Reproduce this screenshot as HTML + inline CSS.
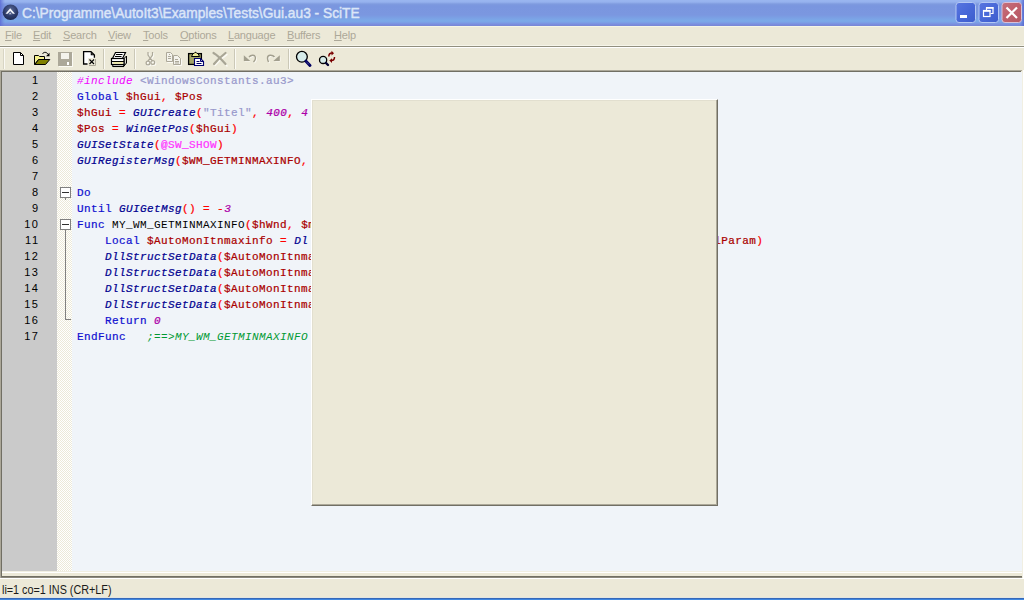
<!DOCTYPE html>
<html>
<head>
<meta charset="utf-8">
<title>SciTE</title>
<style>
html,body{margin:0;padding:0;}
body{width:1024px;height:600px;overflow:hidden;position:relative;background:#ece9d8;font-family:"Liberation Sans",sans-serif;}
.abs{position:absolute;}
#title{left:0;top:0;width:1024px;height:26px;background:linear-gradient(to bottom,#9ab6f0 0px,#96b2ee 2px,#7f9bdf 4px,#7a96df 6px,#7b97e0 15px,#7ba1e5 18px,#7baae8 21px,#7b9ce4 23px,#7b90e0 24px,#7886d4 26px);}
#title .txt{left:22px;top:4px;color:#dbe6f8;font-weight:normal;-webkit-text-stroke:0.45px #dbe6f8;font-size:14.5px;line-height:18px;white-space:nowrap;letter-spacing:0px;transform:scaleX(0.948);transform-origin:0 0;}
#menu{left:0;top:26px;width:1024px;height:20px;background:#ece9d8;border-top:1px solid #f4f6e6;box-sizing:border-box;}
#menu span{position:absolute;top:1px;font-size:11px;line-height:14px;color:#aca899;white-space:nowrap;letter-spacing:-0.2px;}
#menu span u{text-decoration:underline;text-underline-offset:1px;}
#tsep0{left:0;top:45px;width:1024px;height:1px;background:#f6f5ea;}
#tsep{left:0;top:46px;width:1024px;height:1px;background:#918f7f;}
#tsep2{left:0;top:47px;width:1024px;height:1px;background:#ffffff;}
#tool{left:0;top:48px;width:1024px;height:22px;background:#ece9d8;}
.vsep{position:absolute;top:50px;width:1px;height:18px;background:#c5c2b2;border-right:1px solid #fff;}
#edtop{left:0;top:70px;width:1022px;height:1px;background:#aca899;}
#edtop2{left:1px;top:71px;width:1020px;height:1px;background:#716f64;}
#edleft{left:0;top:70px;width:1px;height:508px;background:#aca899;}
#edleft2{left:1px;top:71px;width:1px;height:506px;background:#716f64;}
#lnum{left:2px;top:72px;width:55px;height:499px;background:#cacaca;}
#fold{left:57px;top:72px;width:15px;height:499px;background-color:#fff;background-image:linear-gradient(45deg,#ece9d8 25%,transparent 25%,transparent 75%,#ece9d8 75%),linear-gradient(45deg,#ece9d8 25%,transparent 25%,transparent 75%,#ece9d8 75%);background-size:2px 2px;background-position:0 0,1px 1px;}
#text{left:72px;top:72px;width:950px;height:499px;background:#f0f4f9;}
#edright{left:1022px;top:71px;width:1px;height:506px;background:#f1efe2;}
#edright2{left:1023px;top:70px;width:1px;height:508px;background:#fff;}
#edbot{left:2px;top:571px;width:1020px;height:1px;background:#f1efe2;}
#edbotw{left:2px;top:572px;width:1020px;height:1px;background:#fff;}
#edbot2{left:1px;top:576px;width:1021px;height:2px;background:linear-gradient(#716f64 0,#716f64 60%,#b8b5a6 100%);}
.ln{position:absolute;left:2px;width:37.5px;text-align:right;font-family:"Liberation Sans",sans-serif;font-size:11px;line-height:16px;color:#000;letter-spacing:1.5px;margin-top:0px;}
.cl{position:absolute;left:77px;margin-top:1px;height:16px;white-space:pre;font-family:"Liberation Mono",monospace;font-size:11px;letter-spacing:0.4px;line-height:16px;font-weight:normal;-webkit-text-stroke:0.22px;color:#000;}
.pp{color:#f000ff;font-style:italic;-webkit-text-stroke:0;}
.st{color:#9999cc;}
.kw{color:#1010d0;}
.va{color:#aa0000;}
.op{color:#ff0000;}
.fn{color:#000090;font-style:italic;}
.nu{color:#ac00a9;font-style:italic;}
.ma{color:#ff33ff;}
.cm{color:#009933;font-style:italic;-webkit-text-stroke:0;}
.df{color:#000;-webkit-text-stroke:0;}
#ov{left:311px;top:99px;width:407px;height:407px;background:#ece9d8;box-sizing:border-box;border:1px solid;border-color:#fff #716f64 #716f64 #fff;box-shadow:inset -1px -1px 0 #aca899,inset 1px 1px 0 #e2dfcf;}
#status{left:0;top:578px;width:1024px;height:20px;background:#ece9d8;border-top:1px solid #fff;box-sizing:border-box;}
#status .txt{left:2px;top:4px;font-size:12px;line-height:14px;color:#1a1a1a;white-space:nowrap;letter-spacing:0px;transform:scaleX(0.9);transform-origin:0 0;}
#blue{left:0;top:597px;width:1024px;height:3px;background:linear-gradient(#e2e6e2 0,#e2e6e2 33.3%,#3668b8 33.4%,#3668b8 66.6%,#3f87e0 66.7%);}
</style>
</head>
<body>
<div id="title" class="abs">
  <div class="abs txt">C:\Programme\AutoIt3\Examples\Tests\Gui.au3 - SciTE</div>
</div>
<!--TI-->
<svg class="abs" style="left:0;top:0" width="1024" height="26" viewBox="0 0 1024 26">
<defs>
<radialGradient id="ai" cx="0.5" cy="0.35" r="0.7"><stop offset="0" stop-color="#5a6a98"/><stop offset="0.6" stop-color="#2c3a68"/><stop offset="1" stop-color="#1c2648"/></radialGradient>
<linearGradient id="bb" x1="0" y1="0" x2="1" y2="1"><stop offset="0" stop-color="#5876e0"/><stop offset="0.5" stop-color="#4868d8"/><stop offset="1" stop-color="#3c5ccc"/></linearGradient>
<linearGradient id="rb" x1="0" y1="0" x2="1" y2="1"><stop offset="0" stop-color="#c4707c"/><stop offset="0.5" stop-color="#c0606c"/><stop offset="1" stop-color="#b45864"/></linearGradient>
</defs>
<!-- left edge -->
<defs><linearGradient id="le" x1="0" y1="0" x2="1" y2="0"><stop offset="0" stop-color="#5c6cd6" stop-opacity="0.9"/><stop offset="1" stop-color="#6a7ed8" stop-opacity="0"/></linearGradient><linearGradient id="re" x1="0" y1="0" x2="1" y2="0"><stop offset="0" stop-color="#5c6cd6" stop-opacity="0"/><stop offset="1" stop-color="#5468d0" stop-opacity="0.9"/></linearGradient></defs><rect x="0" y="0" width="5" height="26" fill="url(#le)"/><rect x="1020" y="0" width="4" height="26" fill="url(#re)"/>
<!-- app icon -->
<circle cx="10.500" cy="12.300" r="7.800" fill="url(#ai)"/>
<path d="M5.500,13.800 L10.200,8.300 L15,13.800 L12.800,13.800 L10.200,10.900 L7.700,13.800 Z" fill="#f4f6fa"/>
<path d="M8.800,14.200 L10.200,12.600 L11.700,14.200 Z" fill="#c8d0e0"/>
<!-- buttons -->
<rect x="956" y="2.500" width="19.500" height="20" rx="3" fill="url(#bb)" stroke="#b4c8f4" stroke-width="1"/>
<rect x="960" y="15" width="7" height="3" fill="#fff"/>
<rect x="979" y="2.500" width="19.500" height="20" rx="3" fill="url(#bb)" stroke="#b4c8f4" stroke-width="1"/>
<path d="M986.500,10 V7.800 H993 V13.500 H990.500" fill="none" stroke="#fff" stroke-width="1.200"/>
<rect x="986" y="7" width="7.500" height="1.600" fill="#fff"/>
<rect x="983.500" y="10.500" width="6.500" height="6" fill="none" stroke="#fff" stroke-width="1.200"/>
<rect x="983" y="10" width="7.500" height="1.800" fill="#fff"/>
<rect x="1002" y="2.500" width="19.500" height="20" rx="3" fill="url(#rb)" stroke="#d8c0d8" stroke-width="1"/>
<path d="M1006.500,7.500 L1017,18 M1017,7.500 L1006.500,18" stroke="#fff" stroke-width="2.200" stroke-linecap="butt"/>
</svg>
<!--/TI-->
<div id="menu" class="abs">
  <span style="left:5px"><u>F</u>ile</span>
  <span style="left:33px"><u>E</u>dit</span>
  <span style="left:63px"><u>S</u>earch</span>
  <span style="left:108px"><u>V</u>iew</span>
  <span style="left:143px"><u>T</u>ools</span>
  <span style="left:180px"><u>O</u>ptions</span>
  <span style="left:228px"><u>L</u>anguage</span>
  <span style="left:287px"><u>B</u>uffers</span>
  <span style="left:334px"><u>H</u>elp</span>
</div>
<div id="tsep0" class="abs"></div><div id="tsep" class="abs"></div>
<div id="tsep2" class="abs"></div>
<div id="tool" class="abs"></div>
<!--ICONS-->
<svg id="icons" class="abs" style="left:0;top:46px" width="360" height="26" viewBox="0 46 360 26">
<!-- gripper -->
<rect x="3" y="49" width="1" height="20" fill="#d8d5c4"/><rect x="4" y="49" width="1" height="20" fill="#fbfaf4"/>
<!-- New -->
<path d="M13.5,52.5 H20.5 L23.5,55.5 V64.5 H13.5 Z" fill="#fff" stroke="#000" stroke-width="1"/>
<path d="M20.5,52.5 V55.5 H23.5" fill="none" stroke="#000" stroke-width="1"/>
<!-- Open -->
<path d="M34.5,64.5 V55.5 H38.5 L39.5,56.5 H44.5 V59.5 H38.5 L34.5,64.5 Z" fill="#f6f28e" stroke="#000" stroke-width="1"/>
<path d="M38.7,59.5 H49.8 L45.5,64.5 H34.8 Z" fill="#808000" stroke="#000" stroke-width="1"/>
<path d="M42.5,54 C43.5,51.8 46.5,51.6 48.3,54.5" fill="none" stroke="#000" stroke-width="1"/>
<path d="M49.5,52.8 V56.2 H46 Z" fill="#000"/>
<!-- Save disabled -->
<rect x="59" y="53" width="14" height="14" fill="#fbfaf4"/>
<rect x="58" y="52" width="14" height="14" fill="#aca899"/>
<rect x="61" y="53" width="8" height="6" fill="#f4f3ec"/>
<rect x="67" y="62" width="2" height="3" fill="#fff"/>
<!-- Close -->
<path d="M84,52 H91 L94,55 V64 H84 Z" fill="#fff"/>
<path d="M87.5,64 H83.6 V51.6 H91 L94.4,55 V57.8" fill="none" stroke="#000" stroke-width="1.3"/>
<path d="M91.3,52 V54.7 H94" fill="none" stroke="#000" stroke-width="1.1"/>
<rect x="88" y="58" width="8" height="8" fill="#ece9d8"/>
<path d="M89,65.5 H95.5 V59" fill="none" stroke="#aca899" stroke-width="1"/>
<path d="M89.5,59.5 L94,64 M94,59.5 L89.5,64" stroke="#000" stroke-width="1.1" fill="none"/>
<!-- sep -->
<rect x="103" y="49" width="1" height="20" fill="#cbc8b7"/><rect x="104" y="49" width="1" height="20" fill="#fbfaf4"/>
<!-- Print -->
<path d="M115.5,52.5 H125.5 L122.5,58.5 H112.5 Z" fill="#fff" stroke="#000" stroke-width="1.2"/>
<path d="M116,54.5 H122.5 M115,56.5 H121.5" stroke="#000" stroke-width="1"/>
<path d="M124,58.500 L126.500,56 V63 L124,66 Z" fill="#d8d8d0" stroke="#000" stroke-width="1"/>
<rect x="111.5" y="58.5" width="12.5" height="6" fill="#fff" stroke="#000" stroke-width="1.2"/>
<rect x="112" y="61" width="12" height="1" fill="#000"/>
<rect x="113" y="62.2" width="10" height="1.5" fill="#ece498"/>
<rect x="113" y="65" width="10.5" height="1" fill="#fff"/>
<path d="M112.5,66.4 H124" stroke="#000" stroke-width="1.3"/>
<path d="M112.8,64.500 V66.500 M123.800,64.500 V66.500" stroke="#000" stroke-width="1"/>
<!-- sep -->
<rect x="134" y="49" width="1" height="20" fill="#cbc8b7"/><rect x="135" y="49" width="1" height="20" fill="#fbfaf4"/>
<!-- Cut disabled -->
<g fill="none" stroke-width="1.2">
<g stroke="#fbfaf4" transform="translate(1,1)"><path d="M148,52 V55 L150,58 L152.500,61 M152.500,52 V55 L150.500,58 L148,61"/><circle cx="148" cy="63" r="1.9"/><circle cx="152.800" cy="62.500" r="1.9"/></g>
<g stroke="#aca899"><path d="M148,52 V55 L150,58 L152.500,61 M152.500,52 V55 L150.500,58 L148,61"/><circle cx="148" cy="63" r="1.9"/><circle cx="152.800" cy="62.500" r="1.9"/></g>
</g>
<!-- Copy disabled -->
<g fill="#f4f3ec" stroke-width="1">
<path d="M167.5,53.5 H171.5 L173.5,55.5 V62.5 H167.5 Z" stroke="#fbfaf4" fill="none"/>
<path d="M166.5,52.5 H170.5 L172.5,54.5 V61.5 H166.5 Z" stroke="#aca899"/>
<path d="M168,56.5 H171 M168,58.5 H171 M169,54.5 H170" stroke="#aca899"/>
<path d="M174.5,56.5 H178.5 L181.5,59.5 V65.5 H174.5 Z" stroke="#fbfaf4" fill="none"/>
<path d="M173.5,55.5 H177.5 L180.5,58.5 V64.5 H173.5 Z" stroke="#aca899"/>
<path d="M175,59.5 H178 M175,61.5 H179 M175,63 H179" stroke="#aca899"/>
</g>
<!-- Paste -->
<rect x="188.600" y="53.600" width="12.800" height="10.800" fill="#a4a468" stroke="#000" stroke-width="1.3"/>
<path d="M191.500,56.500 L193,53.500 H194 L195,52.300 H196 L197,53.500 H198 L199.500,56.500 Z" fill="#f0ec98" stroke="#000" stroke-width="1"/>
<path d="M194.500,58.500 H200.500 L203.500,61.500 V65.500 H194.500 Z" fill="#fff" stroke="#000070" stroke-width="1.15"/>
<path d="M200.500,58.500 V61.500 H203.500" fill="none" stroke="#000070" stroke-width="1"/>
<rect x="196.500" y="61" width="3" height="1" fill="#000060"/><rect x="196.500" y="63" width="5" height="1" fill="#000060"/>
<!-- Delete disabled -->
<g fill="none" stroke-linecap="round">
<path d="M214,53.500 Q218,56 226,65 M226,53.500 Q219,58 214,64.500" stroke="#fbfaf4" stroke-width="1.5" transform="translate(1,1)"/>
<path d="M213.500,53 Q218,55.500 225.500,64 M225.500,53 Q219,58 214,64" stroke="#a8a595" stroke-width="2.2"/>
</g>
<!-- sep -->
<rect x="234" y="49" width="1" height="20" fill="#cbc8b7"/><rect x="235" y="49" width="1" height="20" fill="#fbfaf4"/>
<!-- Undo disabled -->
<path d="M245,57 V61.500 H250.500 Z" fill="#fbfaf4"/>
<path d="M250,58 C252,55.500 256.500,55.500 256.500,59 C256.500,61 255.500,62 254.500,63" fill="none" stroke="#fbfaf4" stroke-width="1.1"/>
<path d="M243.800,55.300 V61 H250.300 Z" fill="#a29f8e"/>
<path d="M249,57 C251,54.500 255.500,54.500 255.500,58 C255.500,60 254.500,61 253.500,62" fill="none" stroke="#a29f8e" stroke-width="1.4"/>
<!-- Redo disabled -->
<path d="M280.500,57 V61.500 H275 Z" fill="#fbfaf4"/>
<path d="M275,58 C273,55.500 268.500,55.500 268.500,59 C268.500,61 269,62 269.500,63" fill="none" stroke="#fbfaf4" stroke-width="1.1"/>
<path d="M279.800,55.300 V61 H273.300 Z" fill="#a29f8e"/>
<path d="M274.500,57 C272.500,54.500 267.500,54.500 267.500,58 C267.500,60 268,61 268.500,62" fill="none" stroke="#a29f8e" stroke-width="1.4"/>
<!-- sep -->
<rect x="288" y="49" width="1" height="20" fill="#cbc8b7"/><rect x="289" y="49" width="1" height="20" fill="#fbfaf4"/>
<!-- Find -->
<circle cx="301.900" cy="56.800" r="5.400" fill="#d6ecea" stroke="#000" stroke-width="1.3"/>
<path d="M306,61.200 L310,65.500" stroke="#000060" stroke-width="3" stroke-linecap="round"/>
<path d="M306.500,61.800 L309.500,65" stroke="#8080c0" stroke-width="0.8" stroke-dasharray="1 1"/>
<!-- Replace -->
<circle cx="323.100" cy="59.900" r="3.600" fill="#d6ecea" stroke="#000" stroke-width="1.3"/>
<path d="M326,63 L328,65" stroke="#000030" stroke-width="2.4" stroke-linecap="round"/>
<path d="M328.800,56.500 C328.800,53.500 330,53 332,53" fill="none" stroke="#7a0000" stroke-width="1.5"/>
<path d="M331.500,50.800 L334,53.200 L331.500,55.600 Z" fill="#7a0000"/>
<path d="M334.500,57 C334.500,60 333.500,60.500 331.500,60.500" fill="none" stroke="#7a0000" stroke-width="1.5"/>
<path d="M332,58.200 L329.300,60.500 L332,63 Z" fill="#7a0000"/>
</svg>
<!--/ICONS-->
<div id="edtop" class="abs"></div><div id="edtop2" class="abs"></div>
<div id="edleft" class="abs"></div><div id="edleft2" class="abs"></div>
<div id="lnum" class="abs"></div>
<div id="fold" class="abs"></div>
<div id="text" class="abs"></div><div id="edright" class="abs"></div><div id="edright2" class="abs"></div>
<div id="edbot" class="abs"></div><div id="edbotw" class="abs"></div>
<div id="edbot2" class="abs"></div>
<!--FOLD-->
<svg class="abs" style="left:57px;top:180px" width="15" height="150" viewBox="57 180 15 150" shape-rendering="crispEdges">
<rect x="60.500" y="187.500" width="10" height="10" fill="#fff" stroke="#808080" stroke-width="1"/>
<rect x="62" y="192" width="7" height="1" fill="#303030"/>
<rect x="65" y="198" width="1" height="2" fill="#808080"/>
<rect x="60.500" y="219.500" width="10" height="10" fill="#fff" stroke="#808080" stroke-width="1"/>
<rect x="62" y="224" width="7" height="1" fill="#303030"/>
<rect x="65" y="230" width="1" height="90" fill="#808080"/>
<rect x="65" y="319" width="6" height="1" fill="#808080"/>
</svg>
<!--/FOLD-->
<!--LINES-->
<div class="ln" style="top:72px">1</div><div class="cl" style="top:72px"><span class="pp">#include</span> <span class="st">&lt;WindowsConstants.au3&gt;</span></div>
<div class="ln" style="top:88px">2</div><div class="cl" style="top:88px"><span class="kw">Global</span> <span class="va">$hGui</span><span class="op">,</span> <span class="va">$Pos</span></div>
<div class="ln" style="top:104px">3</div><div class="cl" style="top:104px"><span class="va">$hGui</span> <span class="op">=</span> <span class="fn">GUICreate</span><span class="op">(</span><span class="st">"Titel"</span><span class="op">,</span> <span class="nu">400</span><span class="op">,</span> <span class="nu">4</span></div>
<div class="ln" style="top:120px">4</div><div class="cl" style="top:120px"><span class="va">$Pos</span> <span class="op">=</span> <span class="fn">WinGetPos</span><span class="op">(</span><span class="va">$hGui</span><span class="op">)</span></div>
<div class="ln" style="top:136px">5</div><div class="cl" style="top:136px"><span class="fn">GUISetState</span><span class="op">(</span><span class="ma">@SW_SHOW</span><span class="op">)</span></div>
<div class="ln" style="top:152px">6</div><div class="cl" style="top:152px"><span class="fn">GUIRegisterMsg</span><span class="op">(</span><span class="va">$WM_GETMINMAXINFO</span><span class="op">,</span> <span class="st">"MY_WM_GETMINMAXINFO"</span><span class="op">)</span></div>
<div class="ln" style="top:168px">7</div><div class="cl" style="top:168px"></div>
<div class="ln" style="top:184px">8</div><div class="cl" style="top:184px"><span class="kw">Do</span></div>
<div class="ln" style="top:200px">9</div><div class="cl" style="top:200px"><span class="kw">Until</span> <span class="fn">GUIGetMsg</span><span class="op">()</span> <span class="op">=</span> <span class="op">-</span><span class="nu">3</span></div>
<div class="ln" style="top:216px">10</div><div class="cl" style="top:216px"><span class="kw">Func</span> <span class="df">MY_WM_GETMINMAXINFO</span><span class="op">(</span><span class="va">$hWnd</span><span class="op">,</span> <span class="va">$msg</span><span class="op">,</span> <span class="va">$wParam</span><span class="op">,</span> <span class="va">$lParam</span><span class="op">)</span></div>
<div class="ln" style="top:232px">11</div><div class="cl" style="top:232px">    <span class="kw">Local</span> <span class="va">$AutoMonItnmaxinfo</span> <span class="op">=</span> <span class="fn">Dl</span>                                                          <span class="va">lParam</span><span class="op">)</span></div>
<div class="ln" style="top:248px">12</div><div class="cl" style="top:248px">    <span class="fn">DllStructSetData</span><span class="op">(</span><span class="va">$AutoMonItnmaxinfo</span><span class="op">,</span> <span class="nu">7</span><span class="op">,</span> <span class="va">$Pos</span><span class="op">[</span><span class="nu">2</span><span class="op">])</span></div>
<div class="ln" style="top:264px">13</div><div class="cl" style="top:264px">    <span class="fn">DllStructSetData</span><span class="op">(</span><span class="va">$AutoMonItnmaxinfo</span><span class="op">,</span> <span class="nu">8</span><span class="op">,</span> <span class="va">$Pos</span><span class="op">[</span><span class="nu">3</span><span class="op">])</span></div>
<div class="ln" style="top:280px">14</div><div class="cl" style="top:280px">    <span class="fn">DllStructSetData</span><span class="op">(</span><span class="va">$AutoMonItnmaxinfo</span><span class="op">,</span> <span class="nu">9</span><span class="op">,</span> <span class="va">$Pos</span><span class="op">[</span><span class="nu">2</span><span class="op">])</span></div>
<div class="ln" style="top:296px">15</div><div class="cl" style="top:296px">    <span class="fn">DllStructSetData</span><span class="op">(</span><span class="va">$AutoMonItnmaxinfo</span><span class="op">,</span> <span class="nu">10</span><span class="op">,</span> <span class="va">$Pos</span><span class="op">[</span><span class="nu">3</span><span class="op">])</span></div>
<div class="ln" style="top:312px">16</div><div class="cl" style="top:312px">    <span class="kw">Return</span> <span class="nu">0</span></div>
<div class="ln" style="top:328px">17</div><div class="cl" style="top:328px"><span class="kw">EndFunc</span>   <span class="cm">;==&gt;MY_WM_GETMINMAXINFO</span></div>
<!--/LINES-->
<div id="ov" class="abs"></div>
<div id="status" class="abs"><div class="abs txt">li=1 co=1 INS (CR+LF)</div></div>
<div id="blue" class="abs"></div>
</body>
</html>
